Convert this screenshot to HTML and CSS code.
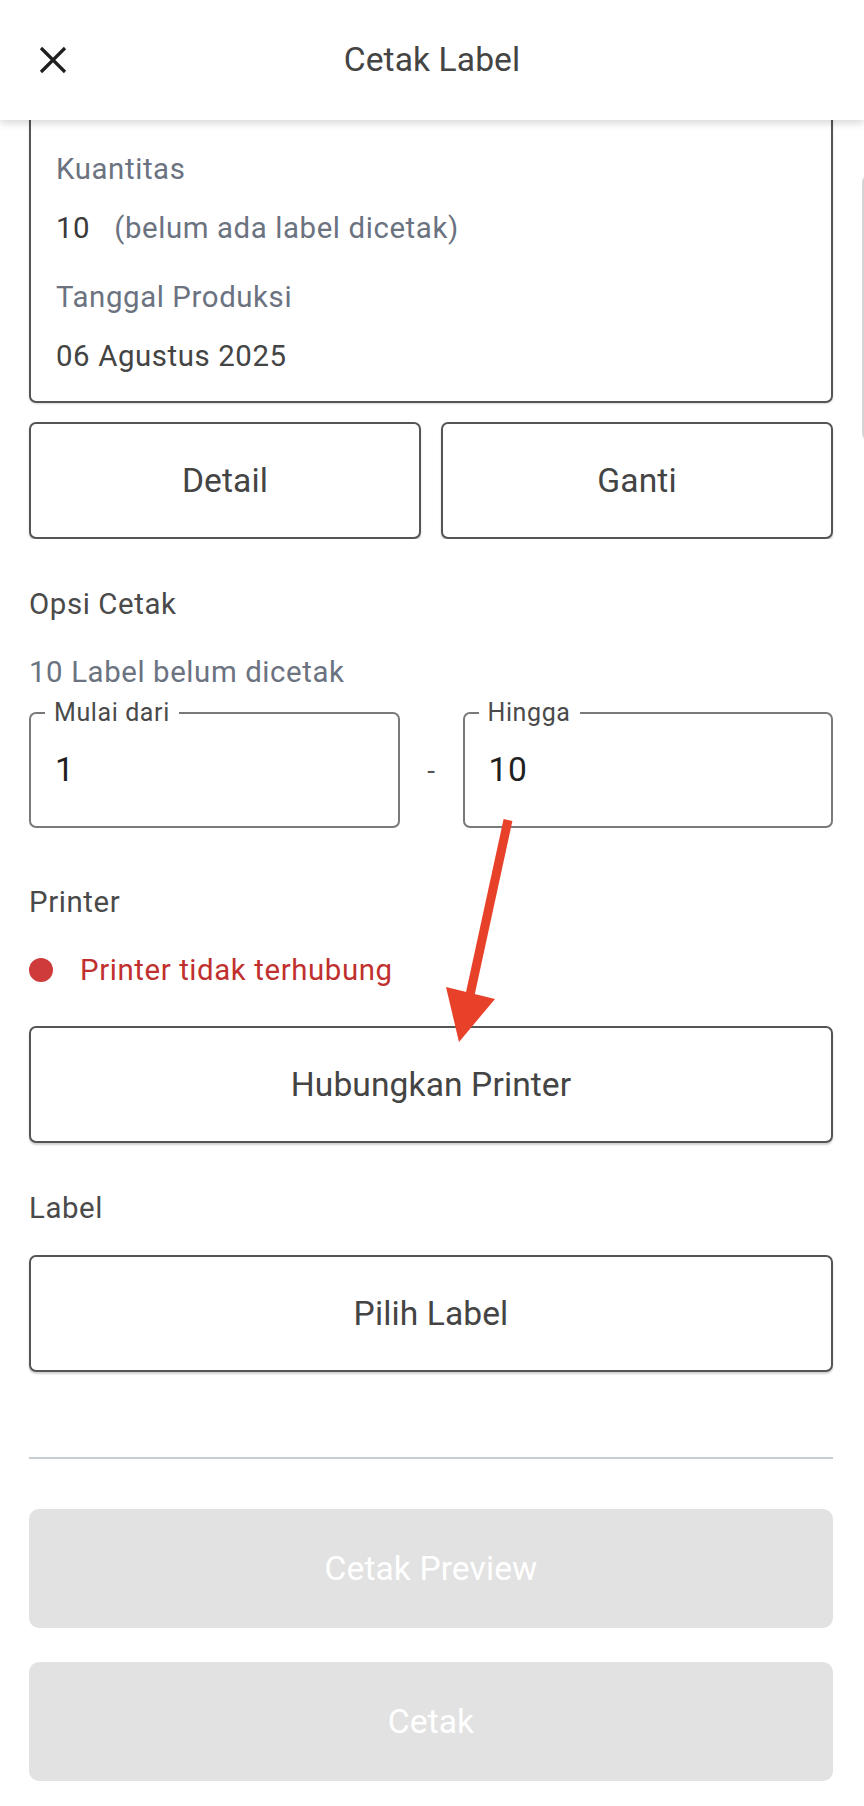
FILE: index.html
```html
<!DOCTYPE html>
<html lang="id">
<head>
<meta charset="utf-8">
<title>Cetak Label</title>
<link rel="stylesheet" href="styles.css">
</head>
<body>
<div class="screen">
  <header class="topbar">
    <div class="topbar-left">
      <svg class="close-icon" width="28" height="28" viewBox="0 0 28 28" aria-hidden="true">
        <path d="M2 2 L26 26 M26 2 L2 26" stroke="#1f1f1f" stroke-width="3.2" fill="none"/>
      </svg>
    </div>
    <div class="topbar-title">Cetak Label</div>
    <div class="topbar-right"></div>
  </header>

  <main class="content">
    <div class="content-inner">
      <div class="carousel">
        <div class="carousel-item">
          <div class="info-card">
            <div class="info-group">
              <div class="info-label">Kuantitas</div>
              <div class="info-value"><span class="qty">10</span><span class="qty-note">(belum ada label dicetak)</span></div>
            </div>
            <div class="info-group">
              <div class="info-label">Tanggal Produksi</div>
              <div class="info-value">06 Agustus 2025</div>
            </div>
          </div>
          <div class="card-actions">
            <button class="btn-outline">Detail</button>
            <button class="btn-outline">Ganti</button>
          </div>
        </div>
        <div class="carousel-peek"></div>
      </div>

      <section class="section">
        <div class="section-title title-opsi">Opsi Cetak</div>
        <div class="hint">10 Label belum dicetak</div>
        <div class="range-row">
          <div class="field">
            <span class="field-label">Mulai dari</span>
            <span class="field-value">1</span>
          </div>
          <div class="range-dash">-</div>
          <div class="field">
            <span class="field-label">Hingga</span>
            <span class="field-value">10</span>
          </div>
        </div>

        <div class="section-title title-printer">Printer</div>
        <div class="status-row">
          <span class="status-dot"></span>
          <span class="status-text">Printer tidak terhubung</span>
        </div>
        <button class="btn-outline btn-wide btn-connect">Hubungkan Printer</button>

        <div class="section-title title-label">Label</div>
        <button class="btn-outline btn-wide btn-pick">Pilih Label</button>

        <hr class="divider">

        <button class="btn-disabled btn-preview">Cetak Preview</button>
        <button class="btn-disabled btn-print">Cetak</button>
      </section>
    </div>
  </main>

  <svg class="annotation-arrow" width="864" height="1806" viewBox="0 0 864 1806" aria-hidden="true">
    <line x1="508" y1="820" x2="470" y2="995" stroke="#e8412a" stroke-width="9"/>
    <polygon points="446,987 495,999 459,1042" fill="#e8412a"/>
  </svg>
</div>
</body>
</html>
```

FILE: styles.css
```css
* {
  box-sizing: border-box;
}

html, body {
  margin: 0;
  padding: 0;
  background: #ffffff;
}

body {
  font-family: Roboto, "Noto Sans", "Liberation Sans", sans-serif;
  color: #444444;
}

.screen {
  position: relative;
  width: 864px;
  height: 1806px;
  overflow: hidden;
  background: #ffffff;
}

/* ---------- top bar ---------- */
.topbar {
  position: relative;
  z-index: 2;
  height: 120px;
  background: #ffffff;
  display: grid;
  grid-template-columns: 1fr auto 1fr;
  align-items: center;
  box-shadow: 0 3px 8px rgba(0, 0, 0, 0.16);
}

.topbar-left {
  padding-left: 39px;
  display: flex;
  align-items: center;
}

.close-icon {
  display: block;
}

.topbar-title {
  font-size: 33.6px;
  line-height: 40px;
  color: #444444;
  letter-spacing: 0.1px;
}

/* ---------- content ---------- */
.content {
  position: relative;
  z-index: 1;
  height: 1686px;
}

.content-inner {
  margin-top: -40px;
}

.carousel {
  display: flex;
  gap: 29px;
  padding-left: 29px;
  overflow: hidden;
}

.carousel-item {
  flex: 0 0 804px;
  display: flex;
  flex-direction: column;
}

.carousel-peek {
  flex: 0 0 300px;
  margin-top: 93px;
  height: 270px;
  border: 2px solid #d4d4d4;
  border-radius: 10px;
}

.info-card {
  border: 2px solid #555555;
  border-radius: 7px;
  padding: 67px 25px 25px;
  display: flex;
  flex-direction: column;
  gap: 29px;
  box-shadow: 0 1px 2px rgba(0, 0, 0, 0.15);
}

.info-group {
  display: flex;
  flex-direction: column;
  gap: 19px;
}

.info-label {
  font-size: 29.4px;
  line-height: 40px;
  color: #6b7280;
  letter-spacing: 0.6px;
}

.info-value {
  font-size: 29.4px;
  line-height: 40px;
  color: #444444;
  letter-spacing: 0.6px;
}

.qty {
  color: #3a3a3a;
  margin-right: 24px;
}

.qty-note {
  color: #6b7280;
}

.card-actions {
  margin-top: 19px;
  display: flex;
  gap: 20px;
}

.card-actions .btn-outline {
  flex: 1 1 0;
}

/* ---------- buttons ---------- */
.btn-outline {
  height: 117px;
  border: 2px solid #555555;
  border-radius: 7px;
  background: #ffffff;
  font-family: inherit;
  font-size: 33.6px;
  color: #444444;
  letter-spacing: 0.1px;
  box-shadow: 0 2px 2px rgba(0, 0, 0, 0.18);
  padding: 0;
}

.btn-wide {
  display: block;
  width: 100%;
}

.btn-disabled {
  display: block;
  width: 100%;
  height: 119px;
  border: none;
  border-radius: 10px;
  background: #e2e2e2;
  color: #ffffff;
  font-family: inherit;
  font-size: 33.6px;
  letter-spacing: 0.1px;
  padding: 0;
}

/* ---------- section ---------- */
.section {
  padding: 0 31px 0 29px;
}

.section-title {
  font-size: 29.4px;
  line-height: 40px;
  color: #4a4a4a;
  letter-spacing: 0.6px;
}

.title-opsi {
  margin-top: 45px;
}

.hint {
  margin-top: 28px;
  font-size: 29.4px;
  line-height: 40px;
  color: #6b7280;
  letter-spacing: 0.6px;
}

.range-row {
  margin-top: 20px;
  display: grid;
  grid-template-columns: 1fr 63px 1fr;
  align-items: center;
}

.field {
  position: relative;
  height: 116px;
  border: 2px solid #7a7a7a;
  border-radius: 7px;
  display: flex;
  align-items: center;
  padding-left: 24px;
}

.field-label {
  position: absolute;
  left: 14px;
  top: -16px;
  padding: 0 9px;
  background: #ffffff;
  font-size: 25px;
  line-height: 30px;
  color: #4a4a4a;
  letter-spacing: 0.6px;
}

.field-value {
  font-size: 33.6px;
  line-height: 40px;
  color: #1f1f1f;
  letter-spacing: 0.6px;
}

.range-dash {
  text-align: center;
  font-size: 28px;
  color: #555555;
}

.title-printer {
  margin-top: 54px;
}

.status-row {
  margin-top: 28px;
  height: 40px;
  display: flex;
  align-items: center;
  gap: 27px;
}

.status-dot {
  width: 24px;
  height: 24px;
  border-radius: 50%;
  background: #cf3b3b;
  flex: 0 0 24px;
}

.status-text {
  font-size: 29.4px;
  line-height: 40px;
  color: #c0302e;
  letter-spacing: 0.6px;
}

.btn-connect {
  margin-top: 36px;
}

.title-label {
  margin-top: 45px;
}

.btn-pick {
  margin-top: 27px;
}

.divider {
  margin: 85px 0 0;
  height: 2px;
  border: none;
  background: #c8cdd5;
}

.btn-preview {
  margin-top: 50px;
}

.btn-print {
  margin-top: 34px;
}

/* ---------- annotation overlay ---------- */
.annotation-arrow {
  position: absolute;
  left: 0;
  top: 0;
  z-index: 3;
  pointer-events: none;
}
```
